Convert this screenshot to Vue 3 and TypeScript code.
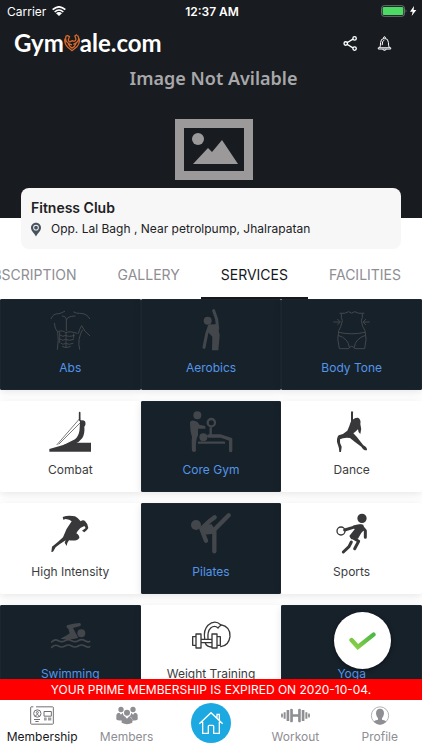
<script setup lang="ts">
import { ref } from 'vue'

interface Shape {
  d: string
  /** Stroke width; a shape without one is filled. */
  w?: number
}

interface Service {
  name: string
  box: string
  shapes: Shape[]
}

const tabs = ['SUBSCRIPTION', 'GALLERY', 'SERVICES', 'FACILITIES']
const currentTab = ref('SERVICES')

const selected = ref<string[]>(['Abs', 'Aerobics', 'Body Tone', 'Core Gym', 'Pilates', 'Swimming', 'Yoga'])

function toggle(name: string) {
  selected.value = selected.value.includes(name)
    ? selected.value.filter((n) => n !== name)
    : [...selected.value, name]
}

const services: Service[] = [
  {
    name: 'Abs',
    box: '145 30 132 132',
    shapes: [
      {
        w: 3,
        d: 'M154 62Q160 46 178 47Q188 44 195 40M222 42Q230 47 240 46Q262 46 270 62M188 54Q200 55 200 66V98M200 66Q203 54 226 54M164 76Q165 92 174 102Q178 126 173 154M270 113Q254 102 246 83Q240 92 236 106M248 96Q242 106 238 124Q236 140 240 154M176 100Q190 96 198 104Q212 98 232 106M182 112Q190 118 198 112Q208 118 224 112M182 124Q190 130 198 124Q208 130 222 124M184 136Q190 142 198 136Q208 142 220 136M188 146Q198 152 212 146M199 104V148M180 102V134M222 108V120',
      },
    ],
  },
  {
    name: 'Aerobics',
    box: '567 30 132 132',
    shapes: [
      { d: 'M611 68a12 12 0 1 0 24 0a12 12 0 1 0-24 0' },
      { w: 9, d: 'M641 38L650 64L653 92M628 84L620 108L612 148M630 84L644 86' },
      { d: 'M626 80L652 78L659 112L655 157H636L637 116L626 104Z' },
    ],
  },
  {
    name: 'Body Tone',
    box: '356 30 132 132',
    shapes: [
      {
        w: 3,
        d: 'M386 46Q402 48 412 41Q421 50 430 41Q440 48 458 46M390 48Q388 58 393 68Q390 86 382 98Q376 122 384 152H412Q416 145 421 145Q426 145 430 152H460Q468 122 461 98Q452 86 450 68Q455 58 453 48M382 103Q421 112 461 103M381 112Q412 122 414 148M462 112Q431 122 429 148M367 72H385M379 64L387 72L379 80M474 72H456M463 64L455 72L463 80',
      },
    ],
  },
  {
    name: 'Combat',
    box: '145 36 132 132',
    shapes: [
      { d: 'M149 161V153L214 134H274V161Z' },
      { w: 2, d: 'M240 62L172 140M244 72L178 138' },
      { w: 5, d: 'M240 44V66L250 76' },
      { d: 'M241 70Q248 64 256 70Q260 80 254 86Q256 106 248 120Q240 132 224 138L190 142Q210 132 226 124Q240 112 240 90Z' },
    ],
  },
  {
    name: 'Core Gym',
    box: '567 36 132 132',
    shapes: [
      { d: 'M580 52a12 12 0 1 0 24 0a12 12 0 1 0-24 0M598 118a12 12 0 1 0 24 0a12 12 0 1 0-24 0' },
      { d: 'M570 76Q570 66 582 68Q594 70 598 80L616 84V92L594 92V112Q586 126 588 158Q582 166 576 158Q574 128 576 118Q570 100 570 76Z' },
      { w: 7, d: 'M623 74a11 11 0 1 0 22 0a11 11 0 1 0-22 0M632 86V112M597 134H672' },
      { w: 10, d: 'M626 114H662L692 124V158' },
    ],
  },
  {
    name: 'Dance',
    box: '356 36 132 132',
    shapes: [
      { w: 6, d: 'M422 43V76' },
      { d: 'M418 72Q428 58 440 59Q450 64 447 78Q452 92 447 108Q440 104 440 94Q432 102 426 106L436 116Q444 126 456 142Q468 148 467 157Q456 158 450 146Q430 132 416 120Q396 118 386 124Q384 134 391 146L389 162H384Q384 150 377 132Q376 118 382 112Q398 108 408 98Q414 86 418 72Z' },
    ],
  },
  {
    name: 'High Intensity',
    box: '145 42 132 132',
    shapes: [
      { d: 'M189 57Q206 50 226 55Q236 60 243 70Q250 64 256 69Q264 76 266 90Q262 98 254 103L247 98L258 90L254 84L242 90Q234 98 230 106Q240 112 239 120Q234 130 208 127Q202 134 201 144L195 134L198 127Q180 138 168 148L160 161L155 162L157 146Q178 130 190 118Q200 90 216 70Q210 64 198 63L191 65Z' },
    ],
  },
  {
    name: 'Pilates',
    box: '567 42 132 132',
    shapes: [
      { d: 'M573 81a15 15 0 1 0 30 0a15 15 0 1 0-30 0' },
      { w: 13, d: 'M604 92L618 128M606 90L628 70L644 58M612 96L640 98L686 52M643 98V160' },
      { d: 'M602 86L634 78L648 98L636 108L610 110Z' },
    ],
  },
  {
    name: 'Sports',
    box: '356 42 132 132',
    shapes: [
      { d: 'M438 61a14 14 0 1 0 28 0a14 14 0 1 0-28 0M424 84Q440 76 456 80L458 96Q448 104 440 122L420 124L414 114L430 94Z' },
      { w: 4, d: 'M377 99a12 12 0 1 0 24 0a12 12 0 1 0-24 0' },
      { w: 9, d: 'M400 96L426 88L450 84L462 98V118M422 118L442 130L430 152M420 132L413 146L396 162' },
    ],
  },
  {
    name: 'Swimming',
    box: '145 48 132 132',
    shapes: [
      { d: 'M233 106a12 12 0 1 0 24 0a12 12 0 1 0-24 0M202 82Q220 76 240 75Q246 78 242 84L220 90L236 120Q210 126 182 122Q204 112 210 106L206 92Q198 90 202 82Z' },
      { w: 5, d: 'M156 132Q166 122 176 128T196 128T216 128T236 128T256 128T270 130M156 148Q166 138 176 144T196 144T216 144T236 144T256 144T270 146' },
    ],
  },
  {
    name: 'Weight Training',
    box: '567 48 132 132',
    shapes: [
      {
        w: 4,
        d: 'M578 116H588V142H578ZM588 108H603V150H588ZM603 124H636V134H603ZM636 108H651V150H636ZM651 116H661V142H651ZM614 122Q610 96 624 82Q644 64 662 80Q692 86 690 116Q686 144 662 146M624 122Q622 100 632 90Q644 80 654 90M616 136Q620 146 634 147M654 90Q660 82 664 82',
      },
    ],
  },
  {
    name: 'Yoga',
    box: '356 48 132 132',
    shapes: [
      { d: 'M411 70a11 11 0 1 0 22 0a11 11 0 1 0-22 0M408 86H436L440 130H404Z' },
      { w: 9, d: 'M380 160Q400 150 422 156Q444 150 464 160' },
    ],
  },
]
</script>

<template>
  <div class="screen">
    <header class="hero">
      <div class="status">
        <span class="carrier">
          Carrier
          <svg class="wifi" viewBox="0 0 42 30" aria-hidden="true">
            <path d="M2 11Q21-6 40 11M8 18Q21 6 34 18" />
            <path class="solid" d="M12 22Q21 14 30 22L21 30Z" />
          </svg>
        </span>
        <span class="time">12:37 AM</span>
        <svg class="battery" viewBox="0 0 108 36" aria-hidden="true">
          <rect x="1.500" y="2" width="69" height="32" rx="8" fill="none" stroke="#7b7f83" stroke-width="2.500" />
          <rect x="5" y="6" width="62" height="24" rx="4" fill="#4cd964" />
          <path d="M74 13q5 5 0 10z" fill="#7b7f83" />
          <path d="M99 3L87 20H95L92 33L106 15H98Z" fill="#fff" />
        </svg>
      </div>
      <div class="brandbar">
        <h1 class="logo">
          <span>Gym</span>
          <svg viewBox="0 0 50 56" aria-hidden="true">
            <path d="M3 14Q0 30 12 41L25 52L40 40Q51 28 47 14M8 4Q2 14 8 24Q14 32 25 34M9 4L17 8L14 16Q12 22 19 25M42 4Q50 14 42 24Q36 30 29 32M41 2L34 6L37 15Q38 21 31 23M19 25Q25 18 31 23M13 30Q18 40 25 44Q34 40 38 29" />
          </svg>
          <span>ale.com</span>
        </h1>
        <div class="actions">
          <button type="button" aria-label="Share">
            <svg viewBox="0 0 42 44">
              <path d="M12 19L28 9M12 25L28 35M2 22a5 5 0 1 0 10 0a5 5 0 1 0-10 0M28 7a5 5 0 1 0 10 0a5 5 0 1 0-10 0M28 37a5 5 0 1 0 10 0a5 5 0 1 0-10 0" />
            </svg>
          </button>
          <button type="button" aria-label="Notifications">
            <svg class="bell" viewBox="0 0 42 46">
              <path d="M2 36H40V40H2ZM6 36Q9 32 9 20Q9 8 21 7Q33 8 33 20Q33 32 36 36M18 7Q18 2 21 2Q24 2 24 7M15 41Q21 48 27 41M14 28Q13 14 21 12" />
            </svg>
          </button>
        </div>
      </div>
      <div class="placeholder">
        <p>Image Not Avilable</p>
        <svg viewBox="0 0 78 61" aria-hidden="true">
          <path fill-rule="evenodd" d="M0 0H78V61H0ZM9 9V52H69V9Z" />
          <circle cx="23" cy="20" r="6" />
          <path d="M18 45L33 29L37 33L47 21L63 45Z" />
        </svg>
      </div>
    </header>

    <section class="club">
      <h2>Fitness Club</h2>
      <p>
        <svg viewBox="0 0 32 44" aria-hidden="true">
          <path fill-rule="evenodd" d="M16 0C7 0 0 7 0 16C0 26 10 32 16 44C22 32 32 26 32 16C32 7 25 0 16 0ZM16 7A9 9 0 1 1 16 25A9 9 0 1 1 16 7ZM16 10A6 6 0 1 0 16 22A6 6 0 1 0 16 10Z" />
        </svg>
        Opp. Lal Bagh , Near petrolpump, Jhalrapatan
      </p>
    </section>

    <nav class="tabs" aria-label="Club sections">
      <button
        v-for="tab in tabs"
        :key="tab"
        type="button"
        :class="{ current: tab === currentTab }"
        @click="currentTab = tab"
      >
        {{ tab }}
      </button>
    </nav>

    <main class="content">
      <div class="grid">
        <button
          v-for="service in services"
          :key="service.name"
          type="button"
          class="tile"
          :class="{ on: selected.includes(service.name) }"
          :aria-pressed="selected.includes(service.name)"
          @click="toggle(service.name)"
        >
          <svg :viewBox="service.box" aria-hidden="true">
            <path
              v-for="(shape, i) in service.shapes"
              :key="i"
              :d="shape.d"
              :class="shape.w ? 'line' : 'fill'"
              :stroke-width="shape.w"
            />
          </svg>
          <span>{{ service.name }}</span>
        </button>
      </div>
      <button type="button" class="confirm" aria-label="Save services">
        <svg viewBox="0 0 80 54" aria-hidden="true">
          <defs>
            <linearGradient id="tick" x1="0" y1="1" x2="1" y2="0">
              <stop offset="0" stop-color="#8ccf45" />
              <stop offset="1" stop-color="#4db847" />
            </linearGradient>
          </defs>
          <path d="M7 24L26 45L73 8" stroke="url(#tick)" />
        </svg>
      </button>
    </main>

    <p class="notice">YOUR PRIME MEMBERSHIP IS EXPIRED ON 2020-10-04.</p>

    <nav class="bottom" aria-label="Main">
      <a href="#membership" class="current">
        <svg viewBox="0 0 72 56" aria-hidden="true" class="outline">
          <path d="M10 2H3Q2 2 2 4V52Q2 54 4 54H68Q70 54 70 52V4Q70 2 68 2H18M11 22a11 11 0 1 0 22 0a11 11 0 1 0-22 0M16 30Q22 20 28 30M19 19a3 3 0 1 0 6 0a3 3 0 1 0-6 0M42 16H64V30H42ZM42 36H50M54 36H64M42 41H50M54 41H64M12 40H30M16 46H26" />
        </svg>
        <span>Membership</span>
      </a>
      <a href="#members">
        <svg viewBox="0 0 72 56" aria-hidden="true">
          <path d="M10 10a8 8 0 1 0 16 0a8 8 0 1 0-16 0M46 10a8 8 0 1 0 16 0a8 8 0 1 0-16 0M27 20a9 9 0 1 0 18 0a9 9 0 1 0-18 0M4 40V28Q5 20 13 20L18 26L23 20Q24 28 29 31Q21 34 20 42Q10 44 4 40ZM68 40V28Q67 20 59 20L54 26L49 20Q48 28 43 31Q51 34 52 42Q62 44 68 40ZM20 50V40Q21 32 30 31L36 38L42 31Q51 32 52 40V50Q36 58 20 50Z" />
        </svg>
        <span>Members</span>
      </a>
      <a href="#home" class="home" aria-label="Home">
        <svg viewBox="0 0 78 72" aria-hidden="true">
          <path d="M4 38L39 5L74 38M14 32V67H31V46Q31 43 34 43H44Q47 43 47 46V67H64V32M57 20V10H64V28" />
        </svg>
      </a>
      <a href="#workout">
        <svg viewBox="0 0 88 56" aria-hidden="true" class="wide">
          <path d="M0 28a3 7 0 0 1 6 0a3 7 0 0 1-6 0M8 18h6v20h-6zM17 11h8v34h-8zM28 8Q34 6 36 10V24H52V10Q54 6 60 8V48Q54 50 52 46V32H36V46Q34 50 28 48ZM63 11h8v34h-8zM74 18h6v20h-6zM82 28a3 7 0 0 1 6 0a3 7 0 0 1-6 0" />
        </svg>
        <span>Workout</span>
      </a>
      <a href="#profile">
        <svg viewBox="0 0 72 56" aria-hidden="true">
          <circle cx="36" cy="28" r="26" fill="none" stroke="#8e8e93" stroke-width="2" />
          <path d="M36 8Q48 8 48 22Q47 32 42 36V41Q52 43 55 47Q36 64 17 47Q20 43 30 41V36Q25 32 24 22Q24 8 36 8Z" />
        </svg>
        <span>Profile</span>
      </a>
    </nav>
  </div>
</template>

<style>
body {
  margin: 0;
}
</style>

<style scoped>
.screen {
  display: flex;
  flex-direction: column;
  height: 100vh;
  overflow: hidden;
  background: #fff;
  color: #202124;
  font-family: Inter, 'Liberation Sans', sans-serif;
  font-size: 12px;
}

button {
  margin: 0;
  padding: 0;
  border: 0;
  background: none;
  color: inherit;
  font: inherit;
  cursor: pointer;
}

a {
  color: inherit;
  text-decoration: none;
}

h1,
h2,
p {
  margin: 0;
}

svg {
  display: block;
}

.hero {
  flex: none;
  height: 218px;
  background: #181b20;
  color: #fff;
}

.status {
  display: grid;
  grid-template-columns: 1fr auto 1fr;
  align-items: center;
  height: 22px;
  padding: 0 5px 0 7px;
}

.carrier {
  display: flex;
  align-items: center;
  gap: 6px;
}

.wifi {
  width: 14px;
  height: 10px;
  fill: none;
  stroke: #fff;
  stroke-width: 5;
}

.wifi .solid {
  fill: #fff;
  stroke: none;
}

.time {
  font-weight: 600;
}

.battery {
  justify-self: end;
  width: 36px;
  height: 12px;
}

.brandbar {
  display: flex;
  align-items: center;
  justify-content: space-between;
  height: 42px;
  padding: 0 30px 0 14px;
}

.logo {
  display: flex;
  align-items: center;
  font-family: Lato, sans-serif;
  font-size: 24px;
  font-weight: 700;
  line-height: 28px;
}

.logo svg {
  width: 16px;
  height: 18px;
  fill: none;
  stroke: #d9692a;
  stroke-width: 4;
}

.actions {
  display: flex;
  gap: 19px;
}

.actions svg {
  width: 15px;
  height: 15px;
  fill: none;
  stroke: #fff;
  stroke-width: 4;
}

.actions .bell {
  stroke-width: 3;
}

.placeholder {
  display: flex;
  flex-direction: column;
  align-items: center;
  gap: 27px;
  padding-left: 5px;
  color: #a8a8aa;
  font-family: 'Noto Sans', sans-serif;
  font-size: 18px;
  font-weight: 600;
  line-height: 28px;
}

.placeholder svg {
  width: 78px;
  height: 61px;
  fill: #9b999a;
}

.club {
  flex: none;
  box-sizing: border-box;
  height: 61px;
  margin: -30px 21px 0;
  padding: 10px;
  border-radius: 8px;
  background: #f7f7f7;
}

.club h2 {
  font-size: 14px;
  font-weight: 600;
  line-height: 20px;
}

.club p {
  display: flex;
  align-items: center;
  gap: 10px;
  line-height: 22px;
  white-space: nowrap;
}

.club svg {
  width: 10px;
  height: 15px;
  fill: #46535f;
}

.tabs {
  display: flex;
  flex: none;
  justify-content: flex-end;
  gap: 1px;
  height: 50px;
  padding-right: 1px;
  overflow: hidden;
}

.tabs button {
  box-sizing: border-box;
  padding: 0 20px;
  border-top: 2px solid transparent;
  border-bottom: 2px solid transparent;
  color: #8e8e93;
  font-size: 14px;
}

.tabs .current {
  border-bottom-color: #16181c;
  color: #16181c;
}

.content {
  position: relative;
  flex: 1;
  min-height: 0;
}

.grid {
  display: grid;
  grid-template-columns: repeat(3, 1fr);
  gap: 11px 0;
  height: 100%;
  overflow: hidden;
}

.tile {
  display: flex;
  flex-direction: column;
  align-items: center;
  gap: 6px;
  height: 91px;
  padding-top: 9px;
  border-radius: 2px;
  background: #fff;
  box-shadow: 0 2px 8px rgba(0, 0, 0, 0.1);
  color: #3c3c3e;
  line-height: 20px;
}

.tile svg {
  width: 44px;
  height: 44px;
}

.tile.on {
  background: #17212a;
  box-shadow: 0 2px 8px rgba(0, 0, 0, 0.1), inset 0 0 0 1px #1b262f;
  color: #5395e8;
}

.fill {
  fill: #38383a;
}

.line {
  fill: none;
  stroke: #38383a;
  stroke-linecap: round;
  stroke-linejoin: round;
}

.on .fill {
  fill: #43474b;
}

.on .line {
  stroke: #43474b;
}

.confirm {
  position: absolute;
  right: 31px;
  bottom: 10px;
  display: grid;
  place-items: center;
  width: 57px;
  height: 57px;
  border-radius: 50%;
  background: #fff;
  box-shadow: 0 1px 4px rgba(0, 0, 0, 0.5);
}

.confirm svg {
  width: 27px;
  height: 18px;
  fill: none;
  stroke-width: 13;
  stroke-linecap: round;
}

.notice {
  z-index: 1;
  flex: none;
  background: #f00;
  color: #fff;
  line-height: 21px;
  text-align: center;
}

.bottom {
  z-index: 1;
  display: grid;
  flex: none;
  grid-template-columns: repeat(5, 1fr);
  justify-items: center;
  height: 50px;
  background: #fff;
  color: #8e8e93;
}

.bottom a {
  display: flex;
  flex-direction: column;
  align-items: center;
  gap: 3px;
  padding-top: 6px;
  line-height: 18px;
}

.bottom svg {
  width: 24px;
  height: 19px;
  fill: #8e8e93;
}

.bottom .wide {
  width: 29px;
}

.bottom .outline {
  fill: none;
  stroke: #707074;
  stroke-width: 3;
}

.bottom .current {
  color: #16181c;
}

.bottom .home {
  align-self: start;
  justify-content: center;
  width: 40px;
  height: 40px;
  margin-top: 3px;
  padding: 0;
  border-radius: 50%;
  background: #1ca9e1;
}

.bottom .home svg {
  width: 26px;
  height: 24px;
  fill: none;
  stroke: #fff;
  stroke-width: 4;
}
</style>
